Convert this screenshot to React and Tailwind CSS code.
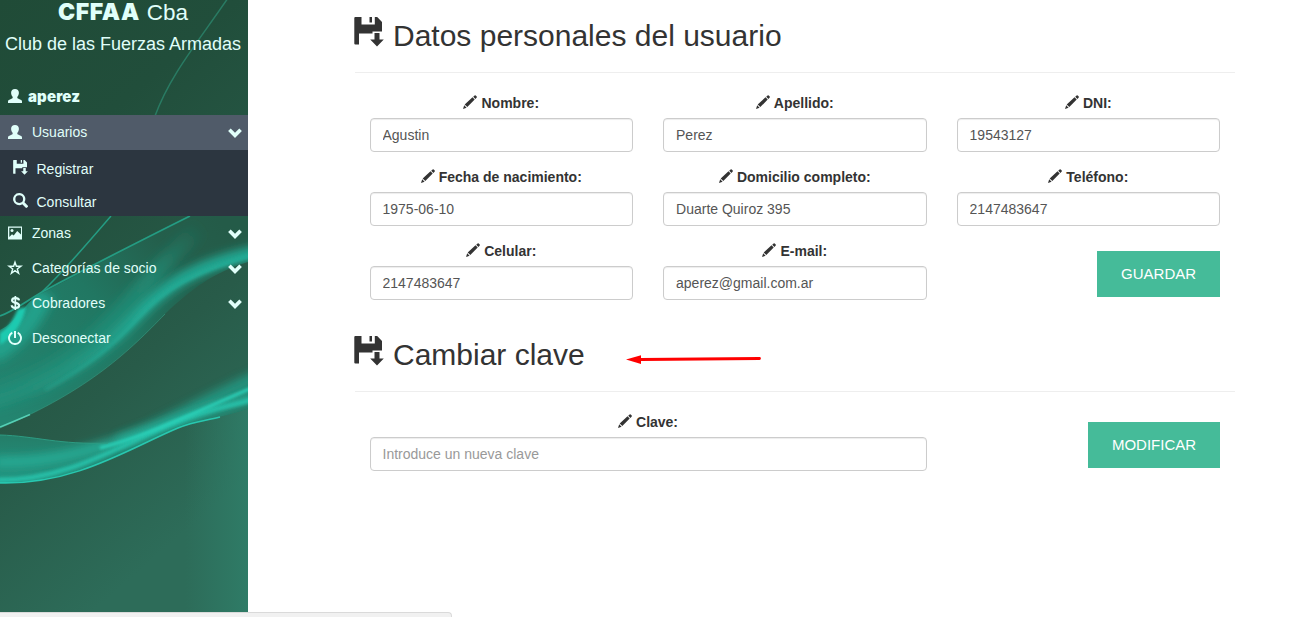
import React from "react";

function Icon({ children, className = "" }) {
  return (
    <svg viewBox="0 0 14 14" className={`shrink-0 fill-current ${className}`} aria-hidden="true">
      {children}
    </svg>
  );
}

const User = ({ className }) => (
  <Icon className={className}>
    <path d="M7 0C4.500 0 3.100 1.500 3.100 3.700c0 1.500.5 2.900 1.300 3.800.5.700.4 1.700-.4 2.100L.9 11.100C.3 11.400 0 11.800 0 12.400V14h14v-1.600c0-.6-.3-1-.9-1.300L10 9.600c-.8-.4-.9-1.400-.4-2.100.8-.9 1.300-2.300 1.300-3.800C10.900 1.500 9.500 0 7 0Z" />
  </Icon>
);

const Save = ({ className }) => (
  <svg viewBox="0 0 30 30" className={`shrink-0 fill-current ${className}`} aria-hidden="true">
    <path d="M1.300 0H7.500V7.500H20.800V0H23.200L28 5V14.500H18.500V16.500H5V27.500H1.300Q.3 27.500.3 26.500V1Q.3 0 1.300 0Z" />
    <path d="M15.500 0H18V5.500H15.500Z" />
    <path d="M20.500 16H25.500V22.500H29.800L23 29.500L16.200 22.500H20.500Z" />
  </svg>
);

const Search = ({ className }) => (
  <Icon className={className}>
    <path fillRule="evenodd" d="M5.800 0a5.700 5.700 0 1 0 2.900 10.600l3 3a1 1 0 0 0 1.400 0l.6-.6a1 1 0 0 0 0-1.400l-3-3A5.700 5.700 0 0 0 5.800 0Zm0 2.100a3.600 3.600 0 1 1 0 7.200 3.600 3.600 0 0 1 0-7.200Z" />
  </Icon>
);

const Picture = ({ className }) => (
  <Icon className={className}>
    <path fillRule="evenodd" d="M0 .5H14.300V13.500H0ZM1.300 1.800V11L4 8.200l1.700 1.300L9.200 5l3.800 3.500V1.800Z" />
    <circle cx="4" cy="4.500" r="1.500" />
  </Icon>
);

const Star = ({ className }) => (
  <Icon className={`overflow-visible ${className}`}>
    <path d="M7 1.200 8.400 5.300H12.900L9.300 8 10.600 12.300 7 9.700 3.400 12.300 4.700 8 1.100 5.300H5.600Z" fill="none" stroke="currentColor" strokeWidth="1.400" />
  </Icon>
);

const Power = ({ className }) => (
  <Icon className={className}>
    <path d="M6 0h2v7H6Z" />
    <path d="M4.300 1.700A6 6 0 1 0 9.700 1.700" fill="none" stroke="currentColor" strokeWidth="1.900" />
  </Icon>
);

const Dollar = ({ className }) => (
  <Icon className={className}>
    <path d="M6.500 0h1.700v14H6.500Z" />
    <path d="M11 4.300C10.800 2.700 9.400 2.200 7.400 2.200S4.100 3 4.100 4.500C4.100 7.600 11.100 6 11.100 9.400c0 1.600-1.500 2.400-3.600 2.400S3.800 11 3.700 9.200" fill="none" stroke="currentColor" strokeWidth="2.200" />
  </Icon>
);

const Pencil = ({ className }) => (
  <Icon className={className}>
    <path d="M0 14l1.200-3.700 2.400 2.500ZM1.700 9.500 9.500 2.300l2.200 2.300L4.300 12.100ZM10.200 1.700 11.600.4a.8.8 0 0 1 1.100 0l1 1a.8.8 0 0 1 0 1.100l-1.300 1.400Z" />
  </Icon>
);

const Chevron = ({ className }) => (
  <Icon className={className}>
    <path d="M2.700 2.500 7 6.700 11.300 2.500 13.900 5.100 7 12 .1 5.100Z" />
  </Icon>
);

function Backdrop() {
  return (
    <svg viewBox="0 0 248 617" preserveAspectRatio="none" className="absolute inset-0 h-full w-full" aria-hidden="true">
      <defs>
        <linearGradient id="base" x1="0" y1="0" x2="0.35" y2="1">
          <stop offset="0" stopColor="#204b37" />
          <stop offset="0.3" stopColor="#214e3b" />
          <stop offset="0.7" stopColor="#285b49" />
          <stop offset="1" stopColor="#2d6c59" />
        </linearGradient>
        <linearGradient id="side" x1="0" y1="0" x2="1" y2="0">
          <stop offset="0" stopColor="#2f7d68" stopOpacity="0" />
          <stop offset="1" stopColor="#2f7d68" stopOpacity="0.9" />
        </linearGradient>
        <linearGradient id="veil" gradientUnits="userSpaceOnUse" x1="0" y1="410" x2="215" y2="215">
          <stop offset="0" stopColor="#238570" />
          <stop offset="0.5" stopColor="#217762" />
          <stop offset="0.8" stopColor="#245f4c" />
          <stop offset="1" stopColor="#245b48" />
        </linearGradient>
        <linearGradient id="band" gradientUnits="userSpaceOnUse" x1="15" y1="400" x2="145" y2="310">
          <stop offset="0" stopColor="#24a58f" stopOpacity="0.25" />
          <stop offset="1" stopColor="#24ab95" />
        </linearGradient>
        <linearGradient id="haze" gradientUnits="userSpaceOnUse" x1="30" y1="390" x2="200" y2="225">
          <stop offset="0" stopColor="#20927b" stopOpacity="0.5" />
          <stop offset="0.7" stopColor="#20927b" stopOpacity="0.7" />
          <stop offset="1" stopColor="#20927b" stopOpacity="0" />
        </linearGradient>
        <linearGradient id="fold" x1="0" y1="0" x2="0" y2="1">
          <stop offset="0" stopColor="#26715d" />
          <stop offset="0.55" stopColor="#24806b" />
          <stop offset="1" stopColor="#229883" />
        </linearGradient>
        <filter id="soft" filterUnits="userSpaceOnUse" x="-60" y="150" width="380" height="380"><feGaussianBlur stdDeviation="5" /></filter>
        <filter id="fine" filterUnits="userSpaceOnUse" x="-60" y="150" width="380" height="380"><feGaussianBlur stdDeviation="1.500" /></filter>
        <clipPath id="upper"><path d="M0 330C18 322 25 300 44 292L190 216H248V262C214 272 190 290 165 314C130 350 90 390 0 428Z" /></clipPath>
        <clipPath id="above"><path d="M0 435C30 436 50 441 75 443L60 340H248V409C225 417 200 420 178 428C130 448 75 485 0 483Z" /></clipPath>
      </defs>
      <rect width="248" height="617" fill="url(#base)" />
      <rect x="185" y="400" width="63" height="217" fill="url(#side)" />
      <path d="M228 -2C198 42 170 75 155 116" fill="none" stroke="#297b63" strokeWidth="1.500" />
      <g clipPath="url(#upper)">
        <rect y="200" width="248" height="240" fill="url(#veil)" />
        <path d="M-10 395C70 370 110 325 145 285S190 240 215 210" fill="none" stroke="url(#haze)" strokeWidth="18" filter="url(#soft)" />
        <path d="M-10 404C50 388 98 355 130 322S188 266 262 251" fill="none" stroke="url(#band)" strokeWidth="13" filter="url(#soft)" />
        <path d="M45 390C88 366 114 345 138 318S190 272 256 254" fill="none" stroke="url(#band)" strokeWidth="4" filter="url(#fine)" />
        <path d="M45 293C28 330 12 342 -8 354" fill="none" stroke="#20a08a" strokeWidth="20" filter="url(#soft)" />
      </g>
      <path d="M0 333C10 327 14 317 18 309L26 307C23 323 13 337 0 345Z" fill="#1fcab0" filter="url(#fine)" />
      <path d="M0 428C90 390 130 350 165 314" fill="none" stroke="#359b82" strokeWidth="1" opacity="0.6" />
      <path d="M0 427Q15 421 30 414.500" fill="none" stroke="#62e2c7" strokeWidth="1.600" opacity="0.8" />
      <path d="M111 216C86 245 66 269 42 292" fill="none" stroke="#249c83" strokeWidth="1.500" />
      <path d="M190 216C132 245 87 268 42 292C22 304 12 312 0 316" fill="none" stroke="#249c83" strokeWidth="1.800" />
      <g clipPath="url(#above)">
        <path d="M0 435C35 436 60 445 108 443C150 434 205 405 248 388V409C225 417 200 420 178 428C130 448 75 485 0 483Z" fill="url(#fold)" />
        <path d="M118 443C160 430 190 408 262 376" fill="none" stroke="#24a08a" strokeWidth="14" filter="url(#soft)" opacity="0.8" />
        <path d="M-5 462C65 464 120 440 170 423S225 405 256 396" fill="none" stroke="#25b39c" strokeWidth="8" filter="url(#soft)" />
        <path d="M-5 480C65 482 120 445 172 424S225 409 256 398" fill="none" stroke="#25bda6" strokeWidth="5" filter="url(#fine)" />
        <path d="M100 448C145 437 205 408 254 387" fill="none" stroke="#29d4bb" strokeWidth="3" filter="url(#fine)" />
      </g>
      <path d="M0 435C35 436 60 445 108 443" fill="none" stroke="#2d9c83" strokeWidth="1" />
      <path d="M0 483C75 485 130 448 178 428C195 421 205 421 220 417" fill="none" stroke="#29d6bd" strokeWidth="1.500" opacity="0.85" />
    </svg>
  );
}

function MenuRow({ icon: Glyph, label, expandable, active }) {
  return (
    <li className={`flex h-[35px] items-center pr-1.5 pb-0.5 pl-2 ${active ? "bg-[#505b69]" : ""}`}>
      <Glyph className="size-3.5" />
      <span className="ml-2.5 flex-1">{label}</span>
      {expandable && <Chevron className="mt-0.5 size-3.5" />}
    </li>
  );
}

function Sidebar() {
  return (
    <aside className="relative h-[617px] w-[248px] shrink-0 overflow-hidden text-[#e0fffa]">
      <Backdrop />
      <div className="relative text-sm">
        <h1 className="-mt-0.5 flex h-[30px] items-baseline justify-center gap-[7px] pr-0.5 text-[22.500px] leading-[28px] whitespace-nowrap">
          <strong className="font-['Inter','Liberation_Sans',sans-serif] text-[23px] font-black tracking-[0.600px]">CFFAA</strong>
          <span>Cba</span>
        </h1>
        <p className="mt-0.5 h-[28px] pr-0.5 text-center text-lg leading-7 whitespace-nowrap">Club de las Fuerzas Armadas</p>
        <div className="mt-[21px] flex h-[36px] items-center pl-2">
          <User className="-mt-0.5 size-3.5" />
          <strong className="ml-1.5 font-['Inter','Liberation_Sans',sans-serif] text-[15px] font-black tracking-[0.150px]">aperez</strong>
        </div>
        <ul>
          <MenuRow icon={User} label="Usuarios" expandable active />
          <li>
            <ul className="h-[66px] bg-[#2c3640] pt-[2px]">
              <li className="flex h-[33px] items-center pl-[13px]">
                <Save className="-mt-0.5 size-[15px]" />
                <span className="ml-[8.500px]">Registrar</span>
              </li>
              <li className="flex h-[33px] items-center pl-[13px]">
                <Search className="-mt-0.5 size-[15px]" />
                <span className="ml-[8.500px]">Consultar</span>
              </li>
            </ul>
          </li>
          <MenuRow icon={Picture} label="Zonas" expandable />
          <MenuRow icon={Star} label="Categorías de socio" expandable />
          <MenuRow icon={Dollar} label="Cobradores" expandable />
          <MenuRow icon={Power} label="Desconectar" />
        </ul>
      </div>
    </aside>
  );
}

function Field({ label, value, placeholder, wide }) {
  return (
    <label className={`block h-[59px] ${wide ? "col-span-2" : ""}`}>
      <span className="mb-[5px] flex h-5 items-center justify-center gap-1 text-sm font-bold text-[#333]">
        <Pencil className="-mt-0.5 size-3.5" />
        {label}
      </span>
      <input
        className="block h-[34px] w-full rounded border border-[#ccc] bg-white px-3 text-sm text-[#555] shadow-[inset_0_1px_1px_rgba(0,0,0,0.075)] outline-none placeholder:text-[#999]"
        defaultValue={value}
        placeholder={placeholder}
      />
    </label>
  );
}

function Heading({ children }) {
  return (
    <h2 className="flex h-14 items-start gap-[9.500px] border-b border-[#eee] text-[30px] leading-[33px] text-[#333]">
      <Save className="-ml-px size-[30px]" />
      <span className="mt-0.5">{children}</span>
    </h2>
  );
}

function ActionButton({ children }) {
  return <button className="h-[46px] bg-[#45bb99] px-6 text-[15px] text-white">{children}</button>;
}

export default function App() {
  return (
    <div className="relative flex h-[617px] w-full overflow-hidden bg-white font-['Liberation_Sans',Arial,sans-serif]">
      <Sidebar />
      <main className="ml-[106.500px] w-[880.600px]">
        <section className="pt-[17px]">
          <Heading>Datos personales del usuario</Heading>
          <form className="mt-5 grid grid-cols-3 gap-x-[30px] gap-y-[15px] px-[15px]">
            <Field label="Nombre:" value="Agustin" />
            <Field label="Apellido:" value="Perez" />
            <Field label="DNI:" value="19543127" />
            <Field label="Fecha de nacimiento:" value="1975-06-10" />
            <Field label="Domicilio completo:" value="Duarte Quiroz 395" />
            <Field label="Teléfono:" value="2147483647" />
            <Field label="Celular:" value="2147483647" />
            <Field label="E-mail:" value="aperez@gmail.com.ar" />
            <div className="flex justify-end pt-2.5">
              <ActionButton>GUARDAR</ActionButton>
            </div>
          </form>
        </section>
        <section className="relative pt-9">
          <Heading>Cambiar clave</Heading>
          <svg viewBox="0 0 136 12" className="absolute top-[53px] left-[271px] h-3 w-[136px] text-[#f00]" aria-hidden="true">
            <path d="M15 6.500 133.500 5.500" stroke="currentColor" strokeWidth="2.800" strokeLinecap="round" />
            <path d="M0 6.500 15 2.200V11Z" fill="currentColor" />
          </svg>
          <form className="mt-5 grid grid-cols-3 gap-x-[30px] px-[15px]">
            <Field label="Clave:" placeholder="Introduce un nueva clave" wide />
            <div className="flex justify-end pt-2.5">
              <ActionButton>MODIFICAR</ActionButton>
            </div>
          </form>
        </section>
      </main>
      <div className="absolute bottom-0 left-0 h-[5px] w-[452px] rounded-tr border-t border-r border-[#dadada] bg-[#f1f1f1]" />
    </div>
  );
}
